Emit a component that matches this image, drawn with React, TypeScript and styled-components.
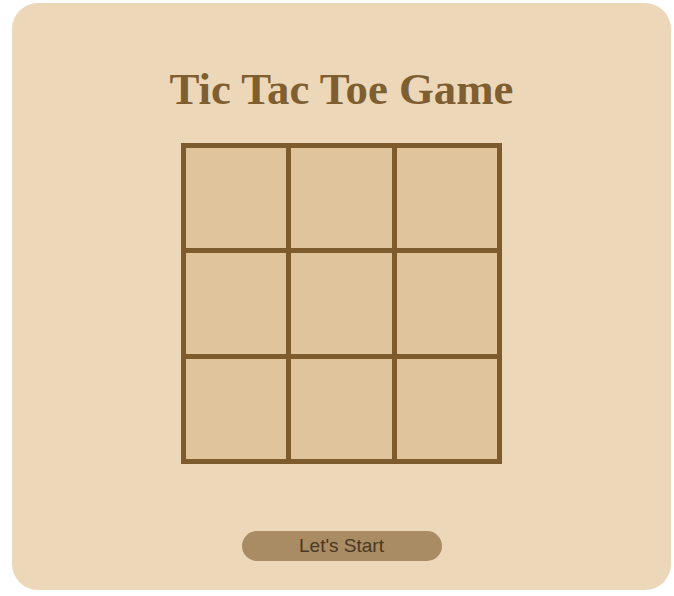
import React from "react";
import styled, { createGlobalStyle } from "styled-components";

const Global = createGlobalStyle`
  html, body { margin: 0; padding: 0; background: #ffffff; }
  body { font-family: "Liberation Serif", serif; }
`;

const Page = styled.div`
  padding: 3px 3px 0 12px;
`;

const Card = styled.div`
  width: 659px;
  height: 587px;
  box-sizing: border-box;
  background: #ecd8b9;
  border-radius: 26px;
  display: flex;
  flex-direction: column;
  align-items: center;
  padding-top: 62px;
`;

const Title = styled.h1`
  margin: 0;
  height: 48px;
  line-height: 48px;
  font-family: "Liberation Serif", serif;
  font-weight: bold;
  font-size: 44.8px;
  color: #7f5f31;
`;

const Board = styled.div`
  margin-top: 30px;
  display: grid;
  grid-template-columns: repeat(3, 100.34px);
  grid-template-rows: repeat(3, 100.34px);
  gap: 5px;
  padding: 5px;
  background: #7d5b2c;
`;

const Cell = styled.div`
  background: #e0c49c;
`;

const StartButton = styled.button`
  margin-top: 67px;
  width: 200px;
  height: 30px;
  border: none;
  border-radius: 15px;
  background: #a98b64;
  color: #4a3823;
  font-family: "Liberation Sans", Arial, sans-serif;
  font-size: 19px;
  padding: 0;
  cursor: pointer;
`;

export default function App() {
  return (
    <>
      <Global />
      <Page>
        <Card>
          <Title>Tic Tac Toe Game</Title>
          <Board>
            {Array.from({ length: 9 }).map((_, i) => (
              <Cell key={i} />
            ))}
          </Board>
          <StartButton>Let's Start</StartButton>
        </Card>
      </Page>
    </>
  );
}
